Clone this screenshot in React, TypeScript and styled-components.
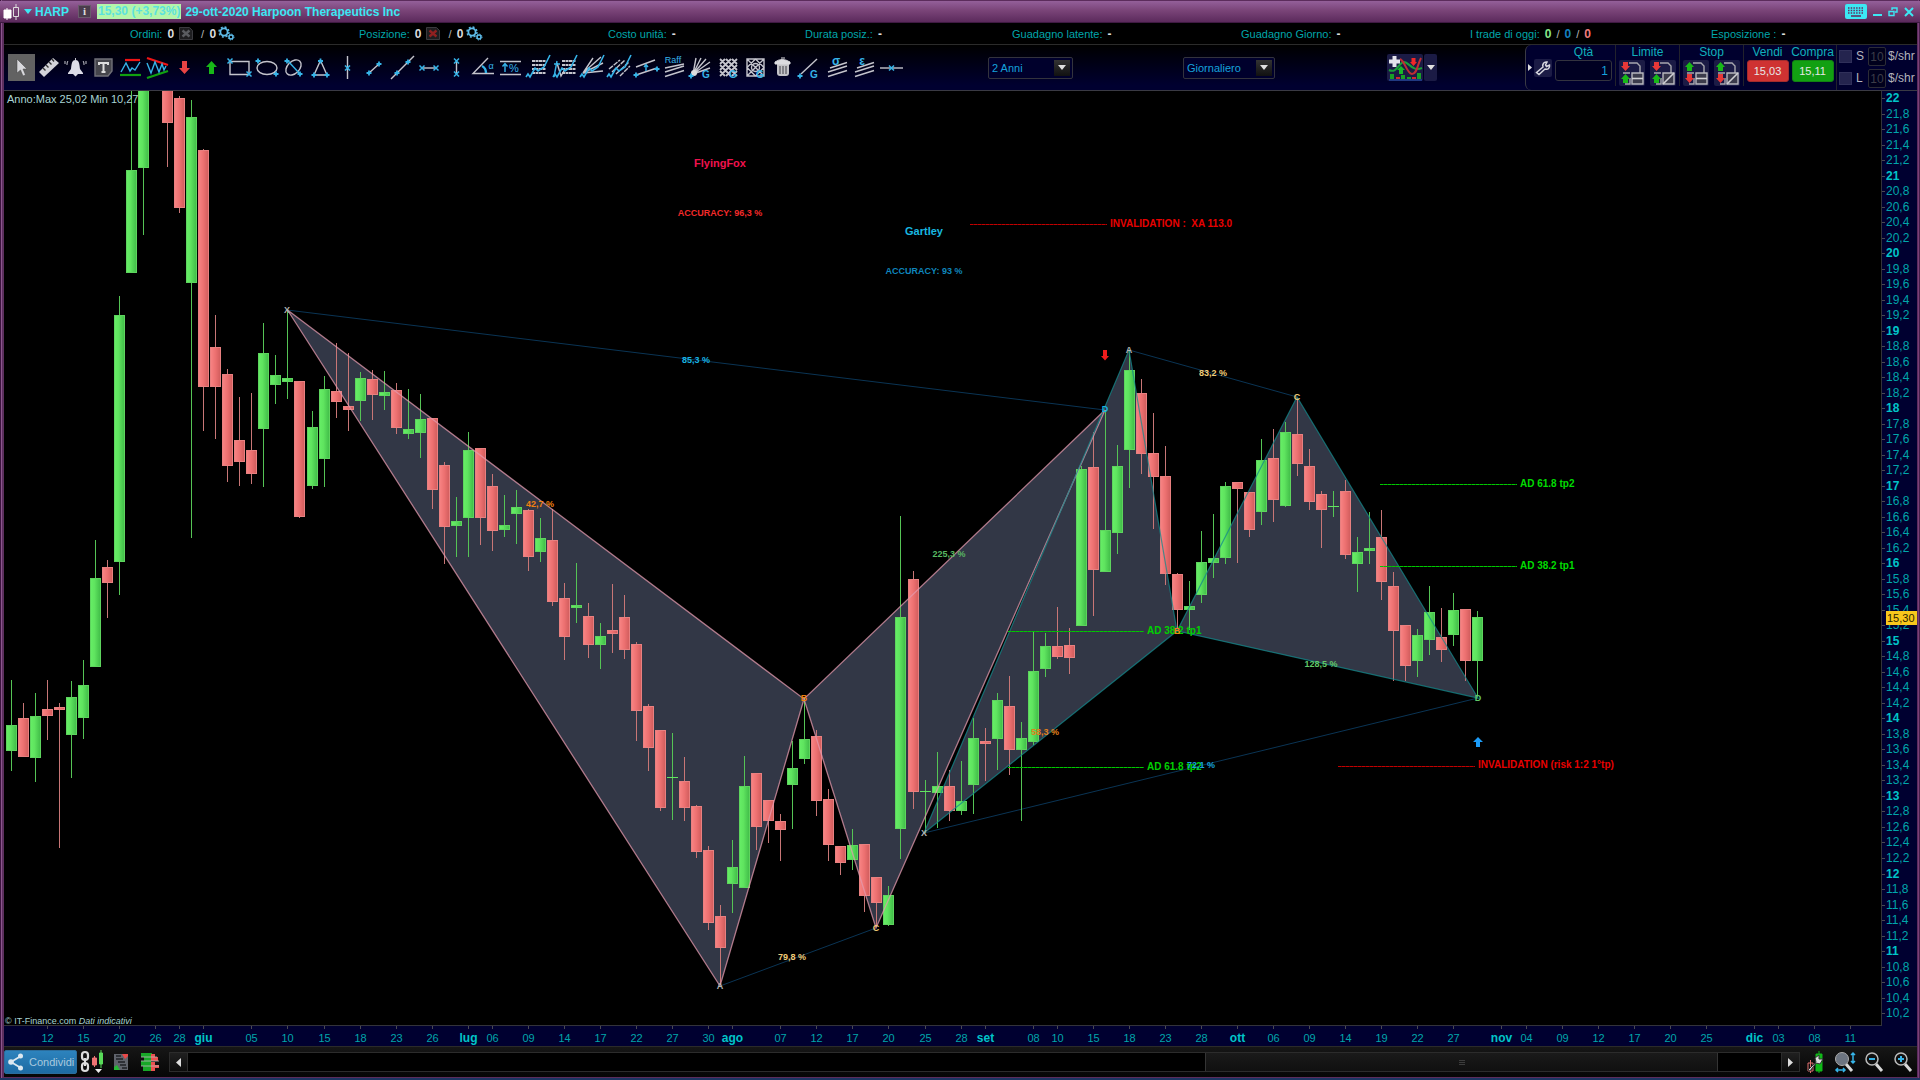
import React from "react";
import styled, { createGlobalStyle } from "styled-components";

const sans = '"Liberation Sans", Arial, sans-serif';
const W = "#c4c4cc";
const C = "#36b4e8";
const TEAL = "#00a6ab";

const Global = createGlobalStyle`
  * { box-sizing: border-box; }
  html, body, #root { height: 100%; }
  body { margin: 0; background: #000; font-family: ${sans}; font-size: 11px; overflow: hidden; }
  button, input, select { font-family: inherit; font-size: inherit; margin: 0; padding: 0; }
`;

const Frame = styled.div`
  display: flex;
  flex-direction: column;
  height: 100vh;
  border-bottom: 2px solid #1c3562;
`;

const Window = styled.div`
  flex: 1;
  min-height: 0;
  display: flex;
  flex-direction: column;
  padding: 1px 3px 1px 4px;
  background: linear-gradient(90deg, #3c143e 0 1px, #8b568d 1px 2px, #5c2e5e 2px 4px, #5c2c5c 4px calc(100% - 2px), #7a4079 calc(100% - 2px) calc(100% - 1px), #4a1f4b calc(100% - 1px));
`;

/* ---------- title bar ---------- */

const TitleBar = styled.header`
  display: flex;
  align-items: center;
  height: 22px;
  flex: none;
  margin: 0 -3px 0 -4px;
  padding: 0 6px 0 3px;
  background: linear-gradient(#94609a, #7a4478 45%, #5b2a5c);
  border-bottom: 1px solid #3f1a42;
  color: #3ce8f4;
  font-size: 12px;
  font-weight: bold;
  white-space: nowrap;
`;

const Bare = styled.button`
  display: flex;
  align-items: center;
  justify-content: center;
  border: 0;
  background: none;
  color: inherit;
  font-weight: inherit;
  cursor: pointer;
`;

const Symbol = styled(Bare)`
  gap: 3px;
  margin-left: 4px;
`;

const InfoButton = styled(Bare)`
  width: 13px;
  height: 13px;
  margin: 0 6px 0 9px;
  background: #4a3c4c;
  border: 1px solid #6a5a6c;
  color: #ddd;
  font: bold 11px/11px "Liberation Serif", serif;
`;

const LastPrice = styled.span`
  padding: 0 1px;
  margin-right: 4px;
  line-height: 15px;
  background: #b4f5ab;
  color: #5ce2de;
`;

const WindowButtons = styled.div`
  display: flex;
  align-items: center;
  gap: 6px;
  margin-left: auto;
`;

/* ---------- account line ---------- */

const Account = styled.section`
  display: grid;
  grid-template-columns: 229fr 249fr 197fr 207fr 229fr 229fr 241fr 206fr;
  align-items: center;
  height: 22px;
  flex: none;
  padding-left: 126px;
  background: #000;
  border-bottom: 1px solid #2b2b2b;
  color: ${TEAL};
  white-space: nowrap;
`;

const Stat = styled.div`
  display: flex;
  align-items: center;
  gap: 5px;
`;

const Value = styled.b<{ $color?: string }>`
  font-size: 12px;
  color: ${(p) => p.$color || "#dcdcdc"};
`;

const Slash = styled.span`
  color: #b8b8b8;
`;

const Pair = styled.span`
  display: flex;
  align-items: center;
  gap: 2px;
  padding-left: 3px;
`;

/* ---------- toolbar ---------- */

const Toolbar = styled.section`
  display: flex;
  align-items: stretch;
  height: 46px;
  flex: none;
  padding-left: 4px;
  background: linear-gradient(#000, #000030 90%);
  border-bottom: 1px solid #3a3a44;
`;

const Tools = styled.div`
  display: flex;
  align-items: center;
  justify-content: space-between;
  width: 897px;
  flex: none;
`;

const Tool = styled(Bare)<{ $active?: boolean }>`
  width: 27px;
  height: 27px;
  background: ${(p) => (p.$active ? "#626262" : "none")};
`;

const Spacer = styled.div<{ $grow: number }>`
  flex: ${(p) => p.$grow} 1 0;
`;

const SelectBox = styled.label<{ $width: number }>`
  position: relative;
  align-self: center;
  display: flex;
  width: ${(p) => p.$width}px;
  height: 22px;
  flex: none;
`;

const Select = styled.select`
  appearance: none;
  width: 100%;
  padding-left: 3px;
  background: #00002c;
  border: 1px solid #33333d;
  border-radius: 2px;
  color: #15a2dc;
`;

const SelectArrow = styled.span`
  position: absolute;
  top: 3px;
  right: 3px;
  width: 16px;
  height: 16px;
  display: flex;
  align-items: center;
  justify-content: center;
  background: linear-gradient(#333, #111);
  pointer-events: none;
`;

const IndicatorGroup = styled.div`
  display: flex;
  align-self: center;
  flex: none;
  gap: 1px;
  height: 27px;
`;

const IndicatorButton = styled(Bare)<{ $width: number }>`
  width: ${(p) => p.$width}px;
  background: #1b1b45;
  border-radius: 2px;
`;

const Panel = styled.div`
  display: flex;
  align-items: stretch;
  flex: none;
  background: #00002e;
  border-left: 1px solid #3a3a44;
  border-radius: 6px 0 0 6px;
  color: #10b0bc;
  font-size: 12px;
`;

const PanelHandle = styled(Bare)`
  width: 8px;
`;

const Column = styled.div`
  display: flex;
  flex-direction: column;
  align-items: center;
  gap: 1px;
  padding: 0 3px;
  border-right: 1px solid #22222c;
  margin: 0 0 4px;
  line-height: 14px;
`;

const Row = styled.div<{ $gap: number }>`
  display: flex;
  gap: ${(p) => p.$gap}px;
`;

const Wrench = styled(Bare)`
  width: 18px;
  height: 18px;
  align-self: flex-start;
  margin-top: 14px;
  background: #1b1b45;
  border-radius: 2px;
`;

const Quantity = styled.input`
  width: 57px;
  height: 21px;
  padding-right: 3px;
  text-align: right;
  background: #000022;
  border: 1px solid #33333f;
  border-radius: 3px;
  color: #15a2dc;
`;

const OrderButton = styled(Bare)`
  width: 26px;
  height: 26px;
  background: #1b1b45;
  border-radius: 2px;
`;

const Trades = styled.div`
  display: flex;
  gap: 2px;
  padding-left: 2px;
`;

const TradeColumn = styled.div`
  display: flex;
  flex-direction: column;
  align-items: center;
  gap: 1px;
  width: 43px;
  line-height: 14px;
`;

const TradeButton = styled.button<{ $buy?: boolean }>`
  width: 42px;
  height: 22px;
  border: 1px solid ${(p) => (p.$buy ? "#128112" : "#a22c2c")};
  border-radius: 3px;
  background: ${(p) => (p.$buy ? "#12a012" : "#cf3232")};
  color: #e8e8e8;
  font-size: 11px;
  cursor: pointer;
`;

const Fees = styled.div`
  display: grid;
  grid-template-columns: 13px 8px 18px 27px;
  grid-template-rows: 19px 19px;
  gap: 3px 4px;
  align-items: center;
  padding: 2px 0 0 2px;
  margin-left: 2px;
  border-left: 1px solid #22222c;
  color: #b4b4bc;
  line-height: 19px;
`;

const FeeCheck = styled.input`
  appearance: none;
  width: 13px;
  height: 13px;
  background: #24244e;
  border: 1px solid #30305a;
`;

const FeeInput = styled.input`
  width: 18px;
  height: 19px;
  text-align: center;
  background: #00001c;
  border: 1px solid #2c2c36;
  border-radius: 2px;
  color: #3c3c48;
`;

const Unit = styled.span`
  margin-left: -2px;
`;

/* ---------- chart ---------- */

const ChartGrid = styled.main`
  flex: 1;
  min-height: 0;
  display: grid;
  grid-template-columns: minmax(0, 1fr) 35px;
  grid-template-rows: minmax(0, 1fr) 20px;
  background: #000030;
`;

const Plot = styled.svg`
  width: 100%;
  height: 100%;
  background: #000;
  border-right: 1px solid #33333a;
  border-bottom: 1px solid #33333a;
`;

const PriceAxis = styled.svg`
  grid-row: 1 / 3;
  grid-column: 2;
  width: 100%;
  height: 100%;
`;

const TimeAxis = styled.svg`
  width: 100%;
  height: 100%;
`;

/* ---------- bottom bar ---------- */

const Footer = styled.footer`
  display: flex;
  align-items: center;
  flex: none;
  height: 31px;
  background: linear-gradient(#161616, #060606);
  border-top: 1px solid #2a2a2a;
`;

const Share = styled.button`
  display: flex;
  align-items: center;
  gap: 6px;
  width: 73px;
  height: 24px;
  padding-left: 3px;
  border: 1px solid #2c6d9c;
  border-radius: 2px;
  background: linear-gradient(#2d83bd, #1d6ba3);
  color: #a9c9de;
  cursor: pointer;
`;

const FooterTool = styled(Bare)<{ $width: number }>`
  width: ${(p) => p.$width}px;
  height: 26px;
  flex: none;
`;

const Scroll = styled.div`
  display: flex;
  flex: 1;
  height: 20px;
  margin: 0 2px 0 2px;
  border: 1px solid #2c2c2c;
  background: #000;
`;

const ScrollButton = styled(Bare)`
  width: 17px;
  background: linear-gradient(#202020, #0c0c0c);
`;

const Track = styled.div`
  display: flex;
  flex: 1;
  border: 0 solid #2c2c2c;
  border-width: 0 1px;
`;

const Before = styled.div`
  flex: 1023 1 0;
`;
const Thumb = styled.div`
  flex: 514 1 0;
  display: flex;
  align-items: center;
  justify-content: center;
  background: linear-gradient(#1a1a1a, #101010);
  border: 0 solid #343434;
  border-width: 0 1px;
`;
const After = styled.div`
  flex: 63 1 0;
`;

/* ---------- data ---------- */

type Candle = [index: number, up: 0 | 1, high: number, top: number, bottom: number, low: number];

const candles: Candle[] = [
  [0, 1, 680, 725, 751, 771], [1, 0, 703, 718, 757, 757], [2, 1, 693, 716, 758, 782], [3, 0, 680, 709, 716, 740],
  [4, 0, 703, 707, 710, 848], [5, 1, 681, 697, 735, 778], [6, 1, 660, 685, 718, 739], [7, 1, 540, 578, 667, 667],
  [8, 0, 560, 567, 583, 618], [9, 1, 296, 315, 562, 595], [10, 1, 80, 170, 273, 273], [11, 1, 60, 70, 168, 235],
  [13, 0, 60, 70, 123, 167], [14, 0, 96, 98, 208, 213], [15, 1, 100, 117, 283, 538], [16, 0, 149, 150, 387, 431],
  [17, 0, 315, 347, 387, 439], [18, 0, 369, 374, 466, 482], [19, 0, 397, 440, 462, 486], [20, 0, 393, 450, 474, 484],
  [21, 1, 323, 353, 429, 487], [22, 1, 355, 375, 385, 404], [23, 1, 310, 378, 382, 399], [24, 0, 381, 381, 517, 518],
  [25, 1, 411, 427, 486, 489], [26, 1, 376, 389, 459, 487], [27, 0, 343, 391, 402, 418], [28, 0, 353, 406, 410, 431],
  [29, 1, 372, 378, 401, 421], [30, 0, 370, 379, 395, 420], [31, 1, 371, 392, 396, 410], [32, 0, 383, 390, 428, 434],
  [33, 1, 389, 429, 434, 439], [34, 1, 394, 419, 433, 458], [35, 0, 418, 418, 490, 509], [36, 0, 462, 465, 527, 564],
  [37, 1, 497, 521, 526, 557], [38, 1, 432, 450, 518, 557], [39, 0, 448, 448, 518, 545], [40, 0, 474, 486, 531, 551],
  [41, 1, 495, 525, 530, 537], [42, 1, 490, 507, 514, 544], [43, 0, 509, 510, 557, 571], [44, 1, 518, 538, 552, 562],
  [45, 0, 509, 540, 602, 606], [46, 0, 583, 598, 637, 660], [47, 1, 563, 605, 608, 623], [48, 0, 603, 616, 645, 658],
  [49, 1, 623, 636, 645, 669], [50, 0, 584, 630, 634, 653], [51, 0, 595, 617, 650, 659], [52, 0, 642, 644, 711, 741],
  [53, 0, 704, 706, 748, 771], [54, 0, 730, 730, 808, 811], [55, 1, 733, 777, 778, 820], [56, 0, 757, 781, 808, 821],
  [57, 0, 805, 806, 852, 858], [58, 0, 846, 850, 923, 930], [59, 0, 905, 916, 948, 985], [60, 1, 840, 867, 884, 913],
  [61, 1, 756, 786, 888, 888], [62, 0, 773, 773, 827, 850], [63, 0, 800, 800, 821, 843], [64, 0, 814, 821, 830, 861],
  [65, 1, 741, 768, 785, 829], [66, 1, 698, 739, 759, 764], [67, 0, 730, 736, 801, 816], [68, 0, 789, 799, 845, 861],
  [69, 0, 846, 846, 863, 875], [70, 1, 829, 845, 860, 870], [71, 0, 844, 844, 896, 912], [72, 0, 877, 877, 903, 927],
  [73, 1, 886, 895, 925, 926], [74, 1, 516, 617, 829, 859], [75, 0, 571, 579, 792, 809], [76, 1, 780, 791, 792, 833],
  [77, 1, 752, 786, 793, 828], [78, 0, 770, 786, 811, 821], [79, 1, 761, 801, 811, 815], [80, 1, 718, 738, 785, 814],
  [81, 0, 728, 741, 744, 781], [82, 1, 693, 700, 739, 770], [83, 0, 676, 706, 750, 775], [84, 1, 722, 738, 750, 821],
  [85, 1, 632, 671, 742, 745], [86, 1, 633, 646, 669, 677], [87, 0, 607, 646, 657, 659], [88, 0, 628, 645, 658, 674],
  [89, 1, 466, 469, 626, 626], [90, 0, 432, 467, 570, 616], [91, 1, 410, 530, 572, 572], [92, 1, 445, 466, 533, 554],
  [93, 1, 350, 370, 450, 488], [94, 0, 379, 393, 454, 474], [95, 0, 413, 453, 477, 529], [96, 0, 446, 476, 574, 585],
  [97, 0, 573, 574, 610, 628], [98, 1, 581, 606, 610, 630], [99, 1, 531, 562, 595, 603], [100, 1, 514, 558, 563, 578],
  [101, 1, 482, 486, 558, 564], [102, 0, 482, 482, 489, 563], [103, 0, 492, 492, 530, 537], [104, 1, 439, 460, 512, 525],
  [105, 0, 429, 458, 500, 522], [106, 1, 422, 432, 506, 507], [107, 0, 398, 434, 464, 476], [108, 0, 449, 466, 502, 510],
  [109, 0, 491, 494, 510, 548], [110, 1, 491, 506, 507, 517], [111, 0, 480, 491, 555, 559], [112, 1, 537, 552, 564, 592],
  [113, 1, 512, 548, 551, 564], [114, 0, 510, 537, 582, 600], [115, 0, 572, 586, 631, 681], [116, 0, 625, 625, 666, 681],
  [117, 1, 629, 635, 661, 677], [118, 1, 586, 612, 640, 655], [119, 0, 608, 637, 650, 662], [120, 1, 593, 610, 635, 646],
  [121, 0, 609, 609, 661, 681], [122, 1, 611, 617, 661, 697],
];

const dates: [string, number][] = [
  ["12", 3], ["15", 6], ["20", 9], ["26", 12], ["28", 14], ["giu", 16], ["05", 20], ["10", 23], ["15", 26], ["18", 29],
  ["23", 32], ["26", 35], ["lug", 38], ["06", 40], ["09", 43], ["14", 46], ["17", 49], ["22", 52], ["27", 55], ["30", 58],
  ["ago", 60], ["07", 64], ["12", 67], ["17", 70], ["20", 73], ["25", 76], ["28", 79], ["set", 81], ["08", 85], ["10", 87],
  ["15", 90], ["18", 93], ["23", 96], ["28", 99], ["ott", 102], ["06", 105], ["09", 108], ["14", 111], ["19", 114],
  ["22", 117], ["27", 120], ["nov", 124], ["04", 126], ["09", 129], ["12", 132], ["17", 135], ["20", 138], ["25", 141],
  ["dic", 145], ["03", 147], ["08", 150], ["11", 153],
];

const barX = (i: number) => Math.floor(11.5 + i * 12.02) + 0.5;
const priceY = (p: number) => 98 + (22 - p) * 77.55;

type Note = { x: number; y: number; t: string; c: string; s?: number; a?: "start" | "middle" };
const notes: Note[] = [
  { x: 720, y: 163, t: "FlyingFox", c: "#f0124e", s: 11 },
  { x: 720, y: 213, t: "ACCURACY: 96,3 %", c: "#f42a2a", s: 9 },
  { x: 924, y: 231, t: "Gartley", c: "#18b8e0", s: 11 },
  { x: 924, y: 271, t: "ACCURACY: 93 %", c: "#0f86bd", s: 9 },
  { x: 1110, y: 223, t: "INVALIDATION :  XA 113.0", c: "#e80000", s: 10, a: "start" },
  { x: 1478, y: 764, t: "INVALIDATION (risk 1:2 1°tp)", c: "#e80000", s: 10, a: "start" },
  { x: 1520, y: 483, t: "AD 61.8 tp2", c: "#00dc00", s: 10, a: "start" },
  { x: 1520, y: 565, t: "AD 38.2 tp1", c: "#00dc00", s: 10, a: "start" },
  { x: 1147, y: 630, t: "AD 38.2 tp1", c: "#00d000", s: 10, a: "start" },
  { x: 1147, y: 766, t: "AD 61.8 tp2", c: "#00d000", s: 10, a: "start" },
  { x: 1201, y: 765, t: "72,1 %", c: "#18a4dc" },
  { x: 540, y: 504, t: "42,7 %", c: "#f08010" },
  { x: 949, y: 554, t: "225,3 %", c: "#58b862" },
  { x: 696, y: 360, t: "85,3 %", c: "#18b4e4" },
  { x: 792, y: 957, t: "79,8 %", c: "#f0cc78" },
  { x: 1045, y: 732, t: "58,3 %", c: "#e0801c" },
  { x: 1213, y: 373, t: "83,2 %", c: "#f0cc78" },
  { x: 1321, y: 664, t: "128,5 %", c: "#60c868" },
  { x: 287, y: 310, t: "X", c: "#b4b4b4" },
  { x: 720, y: 986, t: "A", c: "#b4b4b4" },
  { x: 804, y: 698, t: "B", c: "#f08010" },
  { x: 876, y: 928, t: "C", c: "#f0cc78" },
  { x: 1105, y: 409, t: "D", c: "#18b4e4" },
  { x: 924, y: 833, t: "X", c: "#b4b4b4" },
  { x: 1129, y: 350, t: "A", c: "#b4b4b4" },
  { x: 1177, y: 631, t: "B", c: "#f08010" },
  { x: 1297, y: 397, t: "C", c: "#f0cc78" },
  { x: 1478, y: 698, t: "D", c: "#60c868" },
];

const levels: [number, number, number, string][] = [
  [970, 1107, 224, "#c00000"],
  [1338, 1475, 766, "#c00000"],
  [1380, 1517, 484, "#00c800"],
  [1380, 1517, 566, "#00c800"],
  [1008, 1144, 631, "#00c800"],
  [1008, 1144, 767, "#00c800"],
];

function Chart() {
  const prices = Array.from({ length: 60 }, (_, i) => Math.round((22 - i * 0.2) * 10) / 10);
  return (
    <ChartGrid>
      <Plot role="img" aria-label="HARP, grafico giornaliero">
        <defs>
          <linearGradient id="up">
            <stop offset="0" stopColor="#66ee66" />
            <stop offset="0.4" stopColor="#5fe45f" />
            <stop offset="1" stopColor="#40bc48" />
          </linearGradient>
          <linearGradient id="down">
            <stop offset="0" stopColor="#f88484" />
            <stop offset="0.5" stopColor="#ec7070" />
            <stop offset="1" stopColor="#d05c5c" />
          </linearGradient>
        </defs>
        <g transform="translate(-4,-91)">
          <g fill="#323746">
            <path d="M287.5 310 720 986 804 699Z" />
            <path d="M804 699 876 928 1105 410Z" />
            <path d="M924 833 1129 350 1177 631Z" />
            <path d="M1177 631 1297 397 1478 698Z" />
          </g>
          <path d="M287 310 1105 410M720 986 876 928M1129 350 1297 397M924 833 1478 698" stroke="#0a3454" fill="none" />
          {candles.map(([i, up, high, top, bottom, low]) => {
            const x = barX(i);
            return (
              <g key={i}>
                <path d={`M${x} ${high}V${low}`} stroke={up ? "#55c455" : "#c87676"} />
                {bottom - top < 2 ? (
                  <path d={`M${x - 5.5} ${top + 0.5}h11`} stroke="#62e562" />
                ) : (
                  <rect x={x - 5} y={top + 0.5} width="10" height={bottom - top - 1} fill={up ? "url(#up)" : "url(#down)"} stroke={up ? "#5ed45e" : "#e88080"} />
                )}
              </g>
            );
          })}
          <path d="M287.5 310 720 986 804 699 876 928 1105 410 804 699Z" stroke="#e39aae" strokeOpacity="0.75" strokeWidth="1.3" fill="none" />
          <path d="M924 833 1129 350 1177 631 1297 397 1478 698 1177 631Z" stroke="#148a8c" strokeOpacity="0.75" strokeWidth="1.2" fill="none" />
          {levels.map(([a, b, y, c], i) => (
            <g key={i} stroke={c}>
              <path d={`M${a} ${y + 0.5}H${b}`} strokeOpacity="0.65" />
              <path d={`M${a} ${y + 0.5}H${b}`} strokeDasharray="3 1" />
            </g>
          ))}
          <path d="M1103 350h4v6h2l-4 4.500-4-4.500h2z" fill="#f01c1c" />
          <path d="M1476 747h4v-5h3l-5-5-5 5h3z" fill="#1c9cf8" />
          {notes.map((n, i) => (
            <text key={i} x={n.x} y={n.y + (n.s && n.s > 9 ? 4 : 3)} fill={n.c} fontSize={n.s || 9} fontWeight="bold" textAnchor={n.a || "middle"} xmlSpace="preserve">
              {n.t}
            </text>
          ))}
          <text x="7" y="103" fontSize="11" fill="#a8d4d4">Anno:Max 25,02 Min 10,27</text>
          <text x="5" y="1024" fontSize="9" fill="#a8d4d4">
            © IT-Finance.com <tspan fontStyle="italic">Dati indicativi</tspan>
          </text>
        </g>
      </Plot>
      <PriceAxis aria-label="Prezzi">
        <g transform="translate(0,-91)">
          {prices.map((p) => {
            const y = Math.round(priceY(p));
            const whole = Number.isInteger(p);
            return (
              <g key={p}>
                <path d={`M0 ${y + 0.5}h3`} stroke="#4a4a52" />
                <text x="4" y={y + 4} fill={whole ? "#00c4c8" : TEAL} fontSize="12" fontWeight={whole ? "bold" : "normal"}>
                  {String(p).replace(".", ",")}
                </text>
              </g>
            );
          })}
          <rect x="4" y="611" width="31" height="14" fill="#f8c81c" />
          <text x="5" y="622" fontSize="11" fill="#2c2400">15,30</text>
        </g>
      </PriceAxis>
      <TimeAxis aria-label="Date">
        {dates.map(([t, i]) => {
          const x = barX(i) - 4;
          const month = t.length > 2;
          return (
            <g key={i}>
              <path d={`M${x} 0v3`} stroke="#4a4a52" />
              <text x={x} y="16" textAnchor="middle" fill={month ? "#00c4c8" : TEAL} fontSize={month ? 12 : 11} fontWeight={month ? "bold" : "normal"}>
                {t}
              </text>
            </g>
          );
        })}
      </TimeAxis>
    </ChartGrid>
  );
}

/* ---------- icons ---------- */

const X = ({ x, y }: { x: number; y: number }) => <path d={`M${x - 2.5} ${y - 2.5}l5 5m0-5l-5 5`} stroke={C} strokeWidth="1.5" />;
const P = ({ x, y }: { x: number; y: number }) => <path d={`M${x - 2.5} ${y}h5m-2.500-2.500v5`} stroke={C} strokeWidth="1.8" />;
const G = ({ x = 18, y = 24 }: { x?: number; y?: number }) => (
  <text x={x} y={y} fontSize="10" fontWeight="bold" fill={C} stroke="none" textAnchor="middle">G</text>
);
const Lines = () => <path d="M4 18 23 12M4 22.500 23 16.500M6 14 23 8.500" />;
const Wave = () => <path d="M1 23l2-3 2 3 5-9 3 3 6-4 6-12" stroke={C} strokeWidth="1.6" />;

const tools: [string, React.ReactNode][] = [
  ["Seleziona", <path d="M9 5v14l3.500-3 2.500 6 2.500-1-2.500-6h4z" fill="#d8d8dc" stroke="#444" strokeWidth="0.5" />],
  ["Righello", <><path d="M4 18 18 4l6 5L9 23z" fill="#d4d4da" stroke="none" /><path d="M8 14l2.500 2.500M11 11l2.500 2.500M14 8l2.500 2.500M17 5l2 2.500" stroke="#333" strokeWidth="1.400" /></>],
  ["Allarme", <><path d="M13.500 6c-4 0-4 5-4.500 9l-3 4v1h15v-1l-3-4c-.5-4-.5-9-4.500-9zM11 20h5l-2.500 2.500z" fill="#dcdce6" stroke="none" /><path d="M6 7c-1 1-1 3-1 4M3 7v3M21 7c1 1 1 3 1 4M24 7v3M13.500 4v2" strokeWidth="1" /></>],
  ["Testo", <><path d="M6 5h16v12l-4 5H5V5z" fill="#45454b" stroke="#707078" /><path d="M9 11V9h9v2M13.500 9v9M11.500 18h4" stroke="#ddd" strokeWidth="2" /></>],
  ["Zigzag orizzontale", <><path d="M8 6h15" stroke="#f01414" strokeWidth="2.200" /><path d="M3 21h21" stroke="#10a010" strokeWidth="2.200" /><path d="M4 18l5-9 4 8 2-3 3 2 5-8" stroke={C} /></>],
  ["Triangolo prezzi", <><path d="M3 4l21 7" stroke="#f01414" strokeWidth="2.200" /><path d="M3 24l21-7" stroke="#10a010" strokeWidth="2.200" /><path d="M3 9l4 10 4-11 4 10 3-8 2 6 2-4" stroke={C} /></>],
  ["Freccia giù", <path d="M11 7h5v7h3l-5.500 6L8 14h3z" fill="#e84444" stroke="none" />],
  ["Freccia su", <path d="M11 20h5v-7h3l-5.500-6L8 13h3z" fill="#18b818" stroke="none" />],
  ["Rettangolo", <><path d="M4 7.500h19v13H4z" /><X x={4} y={7} /><X x={23} y={20} /></>],
  ["Ellisse", <><ellipse cx="14" cy="14" rx="10" ry="6.500" /><P x={5} y={7} /><P x={23} y={20} /></>],
  ["Ellisse obliqua", <><ellipse cx="13.500" cy="13.500" rx="9" ry="6" transform="rotate(-45 13.500 13.500)" /><path d="M8 7l12 13" stroke={C} /><P x={7} y={7} /><P x={20} y={20} /></>],
  ["Triangolo", <><path d="M13.500 6.500 20 21H7z" /><P x={13.5} y={7} /><P x={7} y={21} /><P x={20} y={21} /></>],
  ["Linea verticale", <><path d="M13.500 2v23" /><X x={13.5} y={14} /></>],
  ["Segmento", <><path d="M8 19 18 10" /><P x={8} y={19} /><P x={18} y={10} /></>],
  ["Retta", <><path d="M2 25 25 2" /><P x={8} y={19} /><P x={19} y={8} /></>],
  ["Segmento orizzontale", <><path d="M6 14h15" /><X x={6} y={14} /><X x={20} y={14} /></>],
  ["Segmento verticale", <><path d="M13.500 7v13" /><X x={13.5} y={7} /><X x={13.5} y={20} /></>],
  ["Angolo", <><path d="M18 4 3 19.500h21" /><path d="M12 12q4 2 4 7" stroke={C} strokeWidth="2.400" /><text x="21" y="15" fontSize="9" fill={C} stroke="none" textAnchor="middle">α</text></>],
  ["Percentuale", <><path d="M3 7.500h21M3 20.500h21" /><path d="M8 18V10m-2.500 2.500L8 9.500l2.500 3" stroke={C} /><text x="17" y="18" fontSize="11" fill={C} stroke="none" textAnchor="middle">%</text></>],
  ["Ritracciamento", <><path d="M7 7h14M7 11h14M7 15h14M7 19h14" strokeDasharray="3 0.500" strokeWidth="1.800" /><Wave /></>],
  ["Estensione", <><path d="M10 7h14M10 11h14M10 15h14M10 19h14" strokeDasharray="3 0.500" strokeWidth="1.800" /><path d="M5 9l4 13 4-7" /><path d="M2 23l3-16m-3 3h6" stroke={C} /><Wave /></>],
  ["Ventaglio", <><path d="M4 19 22 3M4 19 24 9M4 19 24 17M4 19 14 4" /><Wave /></>],
  ["Canali", <><path d="M3 15 14 6M6 18 19 6M10 20 23 8M14 22 24 12" strokeDasharray="5 1" /><Wave /></>],
  ["Canale parallelo", <><path d="M3 13 22 6M3 21 24 14" /><path d="M13 17v-6m-2 2l2-2.500 2 2.500" stroke={C} /><P x={3} y={21} /><P x={24} y={15} /></>],
  ["Raff", <><path d="M4 18 23 12M4 22.500 23 16.500M4 14 23 10" /><text x="12" y="9" fontSize="9" fill={C} stroke="none" textAnchor="middle">Raff</text></>],
  ["Ventaglio di Gann", <><path d="M5 20 8 4M5 20 13 4M5 20 18 5M5 20 22 8M5 20 22 14" /><circle cx="6" cy="19" r="3" fill="#ddd" stroke="none" /><P x={3} y={22} /><G /></>],
  ["Griglia di Gann", <><path d="M5 5 22 22M11 5l11 11M17 5l5 5M5 11l11 11M5 17l5 5M22 5 5 22M16 5 5 16M10 5l-5 5M22 11 11 22M22 17l-5 5" strokeWidth="1.800" /><G /></>],
  ["Quadrato di Gann", <><path d="M5 5h17v17H5zM13.500 5l8.500 8.500-8.500 8.500L5 13.500zM5 5l17 17M22 5 5 22" /><circle cx="13.500" cy="13.500" r="4" /><G /></>],
  ["Cestino", <><path d="M8 10h12v9q0 3-3 3h-6q-3 0-3-3z" fill="#c4c4c8" stroke="none" /><path d="M6 8q7-5 15 0v2H6zM12 4h4" fill="#dcdce0" stroke="#dcdce0" strokeWidth="1" /><path d="M11 12v8M14 12v8M17 12v8" stroke="#66666c" /></>],
  ["Linea di Gann", <><path d="M5 20 21 5" /><P x={4} y={22} /><G /></>],
  ["Deviazione standard", <><Lines /><text x="12" y="11" fontSize="12" fontWeight="bold" fill={C} stroke="none" textAnchor="middle">σ</text></>],
  ["Errore standard", <><Lines /><text x="11" y="11" fontSize="12" fontWeight="bold" fill={C} stroke="none" textAnchor="middle">ε</text></>],
  ["Linea orizzontale", <><path d="M2 14h23" /><X x={13.5} y={14} /></>],
];

const Down = ({ color = "#e0e0e0", w = 8 }: { color?: string; w?: number }) => (
  <svg width={w} height="5" viewBox="0 0 8 5"><path d="M0 0h8L4 5z" fill={color} /></svg>
);

const Gears = () => (
  <svg width="17" height="15" viewBox="0 0 17 15" fill="none" stroke="#5ebdea">
    <circle cx="6" cy="6" r="3.600" strokeWidth="1.800" />
    <circle cx="6" cy="6" r="5" strokeWidth="1.400" strokeDasharray="2 1.930" />
    <circle cx="13" cy="11" r="2" strokeWidth="1.500" />
    <circle cx="13" cy="11" r="3" strokeDasharray="1.200 1.160" />
  </svg>
);

const CloseBox = ({ color }: { color: string }) => (
  <svg width="14" height="13" viewBox="0 0 14 13">
    <path d="M.5.5h10l3 3v9H.5z" fill="#1e1e20" stroke="#3a3a3e" />
    <path d="M3.500 3.500l7 6m0-6l-7 6" stroke={color} strokeWidth="2.400" />
  </svg>
);

const RED = "#e83838";
const GREEN = "#18b818";

function OrderIcon({ first, second, diagonal }: { first: string; second: string; diagonal?: boolean }) {
  const arrow = (up: boolean, y: number, color: string) => (
    <path transform={`translate(0,${y})`} d={up ? "M4 9V5H2l4.500-5L11 5H9v4z" : "M4 0h5v4h2L6.500 9 2 4h2z"} fill={color} />
  );
  const down = first === RED;
  return (
    <svg width="26" height="26" viewBox="0 0 26 26">
      <path d="M10 3h8l3 3v7M4 13h7M11 18v6H6" fill="none" stroke="#a8a8ae" strokeWidth="1.400" />
      {arrow(!down, 2, first)}
      {arrow(down, 14, second)}
      <path d="M13 13h11v11H13z" fill="#3c3c4c" stroke="#b8b8be" strokeWidth="1.400" />
      <path d={diagonal ? "M13 24 24 13" : "M13 18.500h11"} stroke="#d0d0d4" strokeWidth="1.600" />
    </svg>
  );
}

export default function App() {
  return (
    <Frame>
      <Global />
      <Window>
        <TitleBar>
          <svg width="17" height="18" viewBox="0 0 17 18">
            <path d="M1 7h7v8H1zM4 5v12" fill="#fff" stroke="#fff" />
            <path d="M10.500 4.500h5v9h-5zM13 1v3M13 14v3" fill="none" stroke="#ddd" />
          </svg>
          <Symbol type="button"><Down color="#3ce8f4" />HARP</Symbol>
          <InfoButton type="button" aria-label="Informazioni">i</InfoButton>
          <LastPrice>15,30 (+3,73%)</LastPrice>
          <span>29-ott-2020 Harpoon Therapeutics Inc</span>
          <WindowButtons>
            <Bare type="button" aria-label="Tastiera">
              <svg width="22" height="16" viewBox="0 0 22 16">
                <rect width="22" height="15" rx="2" fill="#3ce8f4" />
                <path d="M3 4h16M3 6.500h16M3 9h16" stroke="#5f3163" strokeWidth="1.300" strokeDasharray="1.500 1.200" />
                <path d="M6 12h10" stroke="#5f3163" strokeWidth="1.600" />
              </svg>
            </Bare>
            <Bare type="button" aria-label="Riduci"><svg width="9" height="12"><path d="M0 9h9" stroke="#3ce8f4" strokeWidth="2" /></svg></Bare>
            <Bare type="button" aria-label="Ripristina">
              <svg width="10" height="12" viewBox="0 0 10 12" fill="none" stroke="#3ce8f4" strokeWidth="1.400"><path d="M1 5.500h5v4H1zM4 4V2h5v4H7" /></svg>
            </Bare>
            <Bare type="button" aria-label="Chiudi"><svg width="10" height="10"><path d="M1 1l8 8m0-8L1 9" stroke="#3ce8f4" strokeWidth="2" /></svg></Bare>
          </WindowButtons>
        </TitleBar>

        <Account>
          <Stat>Ordini: <Value>0</Value><CloseBox color="#5a5c60" /><Pair><Slash>/</Slash><Value>&nbsp;0</Value><Gears /></Pair></Stat>
          <Stat>Posizione: <Value>0</Value><CloseBox color="#902020" /><Pair><Slash>/</Slash><Value>&nbsp;0</Value><Gears /></Pair></Stat>
          <Stat>Costo unità: <Value>-</Value></Stat>
          <Stat>Durata posiz.: <Value>-</Value></Stat>
          <Stat>Guadagno latente: <Value>-</Value></Stat>
          <Stat>Guadagno Giorno: <Value>-</Value></Stat>
          <Stat>
            I trade di oggi: <Value $color="#88e888">0</Value><Slash>/</Slash><Value $color="#1480c0">0</Value><Slash>/</Slash><Value $color="#f07c7c">0</Value>
          </Stat>
          <Stat>Esposizione : <Value>-</Value></Stat>
        </Account>

        <Toolbar>
          <Tools>
            {tools.map(([name, art], i) => (
              <Tool key={name} type="button" aria-label={name} $active={i === 0}>
                <svg width="27" height="27" viewBox="0 0 27 27" fill="none" stroke={W} strokeWidth="1.400">{art}</svg>
              </Tool>
            ))}
          </Tools>
          <Spacer $grow={83} />
          <SelectBox $width={85}>
            <Select aria-label="Periodo"><option>2 Anni</option></Select>
            <SelectArrow><Down /></SelectArrow>
          </SelectBox>
          <Spacer $grow={110} />
          <SelectBox $width={92}>
            <Select aria-label="Intervallo"><option>Giornaliero</option></Select>
            <SelectArrow><Down /></SelectArrow>
          </SelectBox>
          <Spacer $grow={112} />
          <IndicatorGroup>
            <IndicatorButton type="button" $width={36} aria-label="Aggiungi indicatore">
              <svg width="36" height="27" viewBox="0 0 36 27" fill="none">
                <path d="M17 9q6 16 10 4l-4 8z" fill="#0e5c1c" />
                <path d="M2 16c8 4 10-8 15-8s8 10 18 6" stroke="#18a038" strokeWidth="2" />
                <path d="M13 5c5 2 7 15 12 15s5-8 9-16" stroke="#c02c34" strokeWidth="2" />
                <path d="M7.500 2v11M2 7.500h11" stroke="#e4e4ec" strokeWidth="4" />
                <path d="M24.500 4h4v4h1.500l-3.500 4-3.500-4h1.500z" fill="#f02828" />
                <path d="M12 20v-4h-2l4-4 4 4h-2v4z" fill="#18b828" />
                <path d="M3 20h4v5H3zM14 21h4v4h-4zM20 23h4v2h-4zM30 19h4v6h-4z" fill="#18a028" />
                <path d="M9 23h4v2H9zM25 23h4v2h-4z" fill="#d02c2c" />
                <path d="M2 26h33" stroke="#2858c0" />
              </svg>
            </IndicatorButton>
            <IndicatorButton type="button" $width={13} aria-label="Menu indicatori"><Down /></IndicatorButton>
          </IndicatorGroup>
          <Spacer $grow={88} />
          <Panel>
            <PanelHandle type="button" aria-label="Comprimi"><svg width="4" height="7"><path d="M0 0l4 3.500L0 7z" fill="#ddd" /></svg></PanelHandle>
            <Wrench type="button" aria-label="Impostazioni">
              <svg width="16" height="16" viewBox="0 0 16 16" fill="none" stroke="#d8d8e0" strokeWidth="1.500">
                <path d="M1.500 12.500 8 7c-1-3 1-5.500 4-5l-1.500 3 1 1.500 3-1.500c.5 3-1.500 5-4.500 4L4 14.500z" />
              </svg>
            </Wrench>
            <Column>
              <label htmlFor="qty">Qtà</label>
              <Quantity id="qty" defaultValue="1" />
            </Column>
            <Column>
              <span>Limite</span>
              <Row $gap={5}>
                <OrderButton type="button" aria-label="Limite"><OrderIcon first={RED} second={GREEN} /></OrderButton>
                <OrderButton type="button" aria-label="Limite obliquo"><OrderIcon first={RED} second={GREEN} diagonal /></OrderButton>
              </Row>
            </Column>
            <Column>
              <span>Stop</span>
              <Row $gap={5}>
                <OrderButton type="button" aria-label="Stop"><OrderIcon first={GREEN} second={RED} /></OrderButton>
                <OrderButton type="button" aria-label="Stop obliquo"><OrderIcon first={GREEN} second={RED} diagonal /></OrderButton>
              </Row>
            </Column>
            <Trades>
              <TradeColumn><span>Vendi</span><TradeButton type="button">15,03</TradeButton></TradeColumn>
              <TradeColumn><span>Compra</span><TradeButton type="button" $buy>15,11</TradeButton></TradeColumn>
            </Trades>
            <Fees>
              <FeeCheck type="checkbox" id="fs" /><label htmlFor="fs">S</label><FeeInput aria-label="Stop $/shr" defaultValue="10" /><Unit>$/shr</Unit>
              <FeeCheck type="checkbox" id="fl" /><label htmlFor="fl">L</label><FeeInput aria-label="Limite $/shr" defaultValue="10" /><Unit>$/shr</Unit>
            </Fees>
          </Panel>
        </Toolbar>

        <Chart />

        <Footer>
          <Share type="button">
            <svg width="15" height="18" viewBox="0 0 15 18">
              <path d="M13 3 3 9l10 6" fill="none" stroke="#dce8f0" strokeWidth="1.800" />
              <g fill="#dce8f0"><circle cx="12.500" cy="3" r="2.500" /><circle cx="3" cy="9" r="2.800" /><circle cx="12.500" cy="15" r="2.500" /></g>
            </svg>
            Condividi
          </Share>
          <FooterTool type="button" $width={32} aria-label="Collega grafici">
            <svg width="26" height="24" viewBox="0 0 26 24" fill="none">
              <rect x="2" y="2" width="6" height="8" rx="3" stroke="#ddd" strokeWidth="2.200" />
              <rect x="2" y="13" width="6" height="8" rx="3" stroke="#ddd" strokeWidth="2.200" />
              <path d="M5 8v8" stroke="#ddd" strokeWidth="2" />
              <path d="M12.500 8h4v7h-4zM14.500 6v11" fill="#f07474" stroke="#f07474" />
              <path d="M19.500 3h3v11h-3zM21 0v18" fill="#58dc58" stroke="#58dc58" />
              <path d="M15 19h7l-3.500 4z" fill="#eee" />
            </svg>
          </FooterTool>
          <FooterTool type="button" $width={24} aria-label="Lista ordini">
            <svg width="16" height="18" viewBox="0 0 16 18">
              <rect x="1" y="1" width="14" height="16" fill="#60646c" />
              <path d="M3 3h5M3 6h7M5 9h7M7 12h6M9 15h5" stroke="#1e2024" strokeWidth="1.500" />
              <path d="M9 1h6v2l-3 3z" fill="#e84848" /><path d="M1 17v-3l3-2 3 5z" fill="#28b838" />
            </svg>
          </FooterTool>
          <FooterTool type="button" $width={34} aria-label="Profondità">
            <svg width="20" height="20" viewBox="0 0 20 20">
              <path d="M1 1h11v4H1zM4 5h7v4H4zM1 9h10v5H1zM3 14h8v5H3z" fill="#18a828" />
              <path d="M11 2h4v3h-4zM11 5h7v4h-7zM11 10h4v3h-4zM11 13h8v3h-8zM11 16h4v3h-4z" fill="#e85050" />
              <path d="M1 5h16M1 9h18M1 14h18" stroke="#bbb" strokeWidth="0.800" />
            </svg>
          </FooterTool>
          <Scroll>
            <ScrollButton type="button" aria-label="Indietro"><svg width="5" height="9"><path d="M5 0v9L0 4.500z" fill="#ddd" /></svg></ScrollButton>
            <Track>
              <Before />
              <Thumb><svg width="6" height="5"><path d="M0 .5h6M0 2.500h6M0 4.500h6" stroke="#3c3c3c" /></svg></Thumb>
              <After />
            </Track>
            <ScrollButton type="button" aria-label="Avanti"><svg width="5" height="9"><path d="M0 0v9l5-4.500z" fill="#ddd" /></svg></ScrollButton>
          </Scroll>
          <FooterTool type="button" $width={28} aria-label="Opzioni grafico">
            <svg width="20" height="24" viewBox="0 0 20 24" fill="none">
              <path d="M10 4h6v17h-6zM13 1v22" fill="#10b818" stroke="#10b818" />
              <path d="M2 13h5v8H2zM4.500 10v13" stroke="#e07070" />
              <path d="M2 20 10 12l-1-4 4-3v4h4l-3 5-4-1-6 8z" fill="#ddd" stroke="#333" />
            </svg>
          </FooterTool>
          <FooterTool type="button" $width={29} aria-label="Adatta zoom">
            <svg width="22" height="24" viewBox="0 0 22 24" fill="none">
              <path d="M12 14l6 7" stroke="#d8d8d8" strokeWidth="3" />
              <circle cx="8" cy="9" r="6.500" fill="#6c7480" stroke="#aaa" />
              <path d="M19 3v10m-2-8l2-2 2 2m-4 6l2 2 2-2M2 20h9M4 18l-2 2 2 2m5-4l2 2-2 2" stroke={C} strokeWidth="1.500" />
            </svg>
          </FooterTool>
          {[false, true].map((plus) => (
            <FooterTool key={String(plus)} type="button" $width={29} aria-label={plus ? "Ingrandisci" : "Riduci zoom"}>
              <svg width="20" height="24" viewBox="0 0 20 24" fill="none">
                <path d="M12 14l6 7" stroke="#d8d8d8" strokeWidth="3" />
                <circle cx="8" cy="9" r="6" stroke="#bbb" strokeWidth="1.500" />
                <path d={plus ? "M5 9h6M8 6v6" : "M5 9h6"} stroke={C} strokeWidth="2" />
              </svg>
            </FooterTool>
          ))}
        </Footer>
      </Window>
    </Frame>
  );
}
